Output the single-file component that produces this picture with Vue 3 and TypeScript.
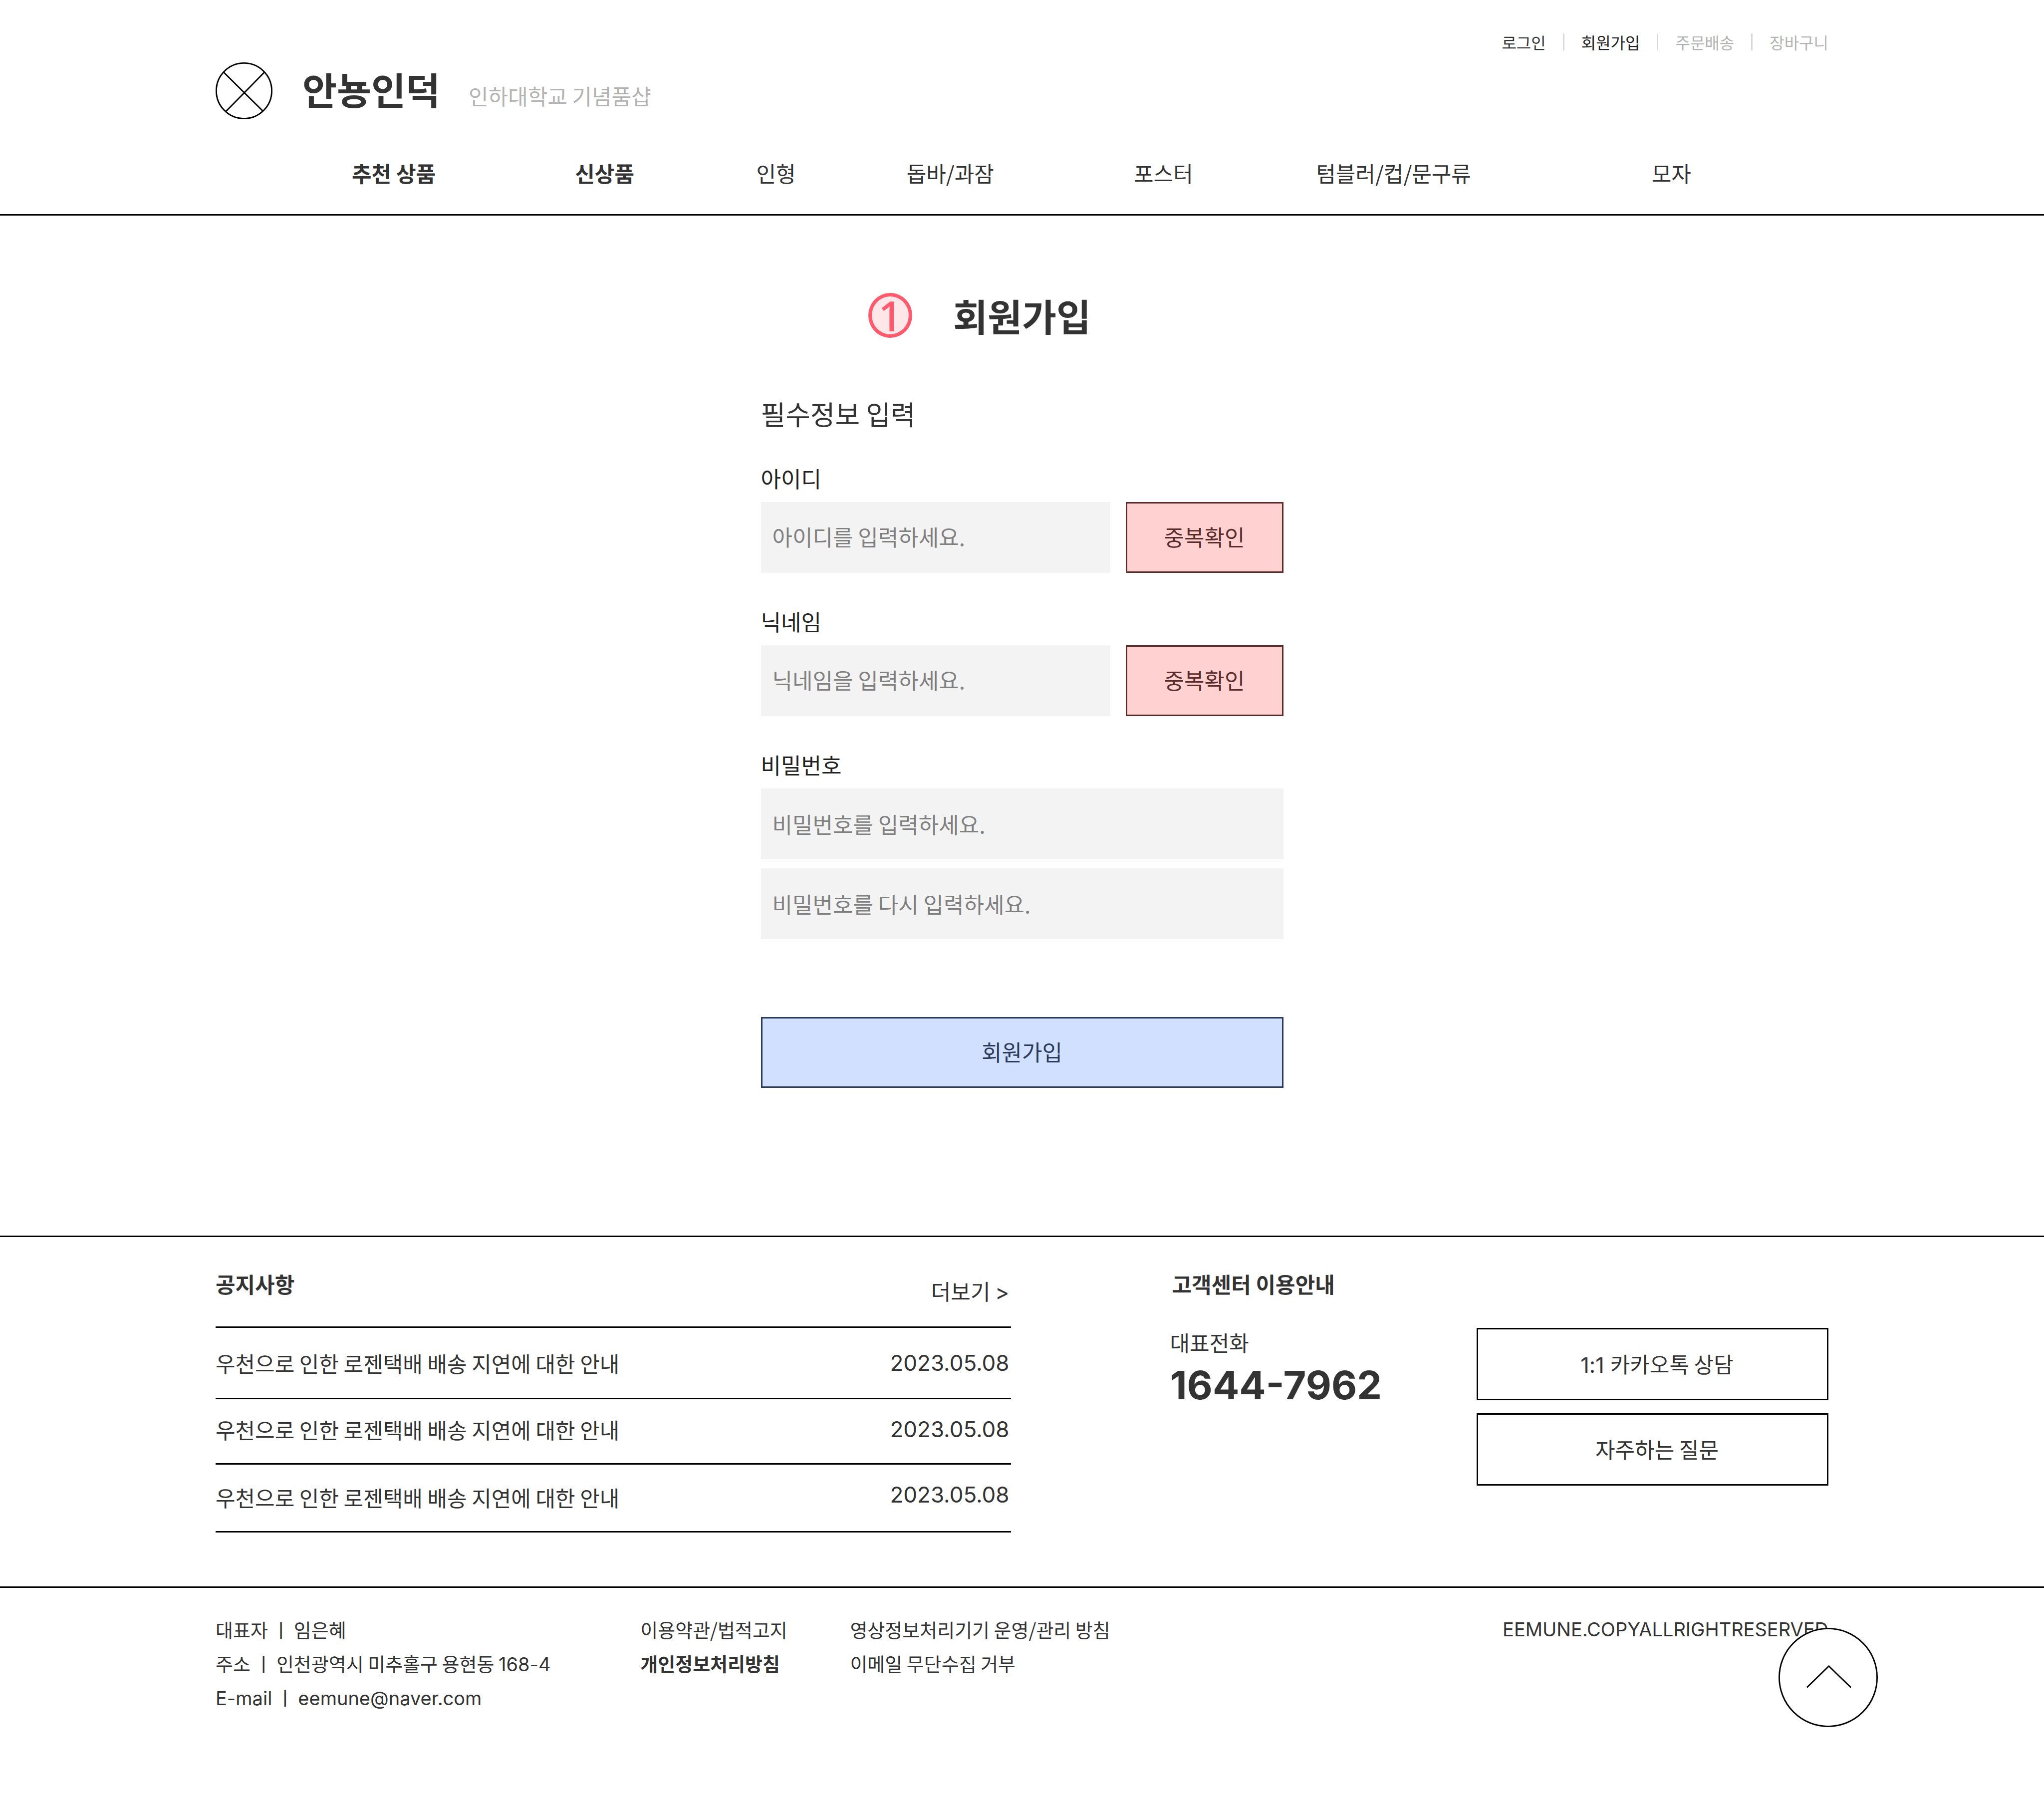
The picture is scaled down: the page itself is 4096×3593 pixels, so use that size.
<script setup lang="ts">
import { ref } from 'vue'

interface LinkItem {
  label: string
  strong?: boolean
  muted?: boolean
}

interface Notice {
  title: string
  date: string
}

const utilityLinks: LinkItem[] = [
  { label: '로그인' },
  { label: '회원가입', strong: true },
  { label: '주문배송', muted: true },
  { label: '장바구니', muted: true },
]

const categories: LinkItem[] = [
  { label: '추천 상품', strong: true },
  { label: '신상품', strong: true },
  { label: '인형' },
  { label: '돕바/과잠' },
  { label: '포스터' },
  { label: '텀블러/컵/문구류' },
  { label: '모자' },
]

const notices: Notice[] = [
  { title: '우천으로 인한 로젠택배 배송 지연에 대한 안내', date: '2023.05.08' },
  { title: '우천으로 인한 로젠택배 배송 지연에 대한 안내', date: '2023.05.08' },
  { title: '우천으로 인한 로젠택배 배송 지연에 대한 안내', date: '2023.05.08' },
]

const userId = ref('')
const nickname = ref('')
const password = ref('')
const passwordCheck = ref('')
</script>

<template>
  <div class="page">
    <header class="header">
      <nav class="utility" aria-label="회원 메뉴">
        <template v-for="(link, i) in utilityLinks" :key="link.label">
          <span v-if="i > 0" class="divider"></span>
          <a href="#" :class="{ dark: link.strong, muted: link.muted }">{{ link.label }}</a>
        </template>
      </nav>

      <div class="brand">
        <svg class="logo" viewBox="0 0 160 160" aria-hidden="true">
          <g fill="none" stroke="#000" stroke-width="4">
            <circle cx="80" cy="80" r="78" />
            <path d="M22 27 134 138M138 27 29 138" />
          </g>
        </svg>
        <div class="brand-text">
          <a href="#" class="brand-name">안뇽인덕</a>
          <span class="brand-sub">인하대학교 기념품샵</span>
        </div>
      </div>

      <nav class="categories" aria-label="상품 분류">
        <a v-for="c in categories" :key="c.label" href="#" :class="{ bold: c.strong }">{{ c.label }}</a>
      </nav>
    </header>

    <main class="main">
      <div class="heading">
        <span class="step">1</span>
        <h1>회원가입</h1>
      </div>

      <form class="form" @submit.prevent>
        <h2>필수정보 입력</h2>

        <div class="field">
          <label for="user-id">아이디</label>
          <div class="row">
            <input id="user-id" v-model="userId" type="text" placeholder="아이디를 입력하세요." />
            <button type="button" class="check">중복확인</button>
          </div>
        </div>

        <div class="field">
          <label for="nickname">닉네임</label>
          <div class="row">
            <input id="nickname" v-model="nickname" type="text" placeholder="닉네임을 입력하세요." />
            <button type="button" class="check">중복확인</button>
          </div>
        </div>

        <div class="field">
          <label for="password">비밀번호</label>
          <div class="stack">
            <input id="password" v-model="password" type="password" placeholder="비밀번호를 입력하세요." />
            <input
              v-model="passwordCheck"
              type="password"
              aria-label="비밀번호 확인"
              placeholder="비밀번호를 다시 입력하세요."
            />
          </div>
        </div>

        <button type="submit" class="submit">회원가입</button>
      </form>
    </main>

    <section class="support">
      <div class="notice">
        <div class="notice-head">
          <h3>공지사항</h3>
          <a href="#" class="more">더보기 <span class="latin">&gt;</span></a>
        </div>
        <table>
          <tbody>
            <tr v-for="(n, i) in notices" :key="i">
              <td>{{ n.title }}</td>
              <td class="date">{{ n.date }}</td>
            </tr>
          </tbody>
        </table>
      </div>

      <div class="center">
        <h3>고객센터 이용안내</h3>
        <div class="contact">
          <div>
            <p class="tel-label">대표전화</p>
            <p class="tel">1644-7962</p>
          </div>
          <div class="contact-buttons">
            <button type="button"><span class="latin">1:1&nbsp;</span>카카오톡 상담</button>
            <button type="button">자주하는 질문</button>
          </div>
        </div>
      </div>
    </section>

    <footer class="footer">
      <div>
        <p>대표자 ㅣ 임은혜</p>
        <p>주소 ㅣ 인천광역시 미추홀구 용현동 <span class="latin">168-4</span></p>
        <p><span class="latin">E-mail</span> ㅣ <span class="latin">eemune@naver.com</span></p>
      </div>
      <div>
        <p><a href="#">이용약관/법적고지</a></p>
        <p><a href="#" class="bold">개인정보처리방침</a></p>
      </div>
      <div>
        <p><a href="#">영상정보처리기기 운영/관리 방침</a></p>
        <p><a href="#">이메일 무단수집 거부</a></p>
      </div>
      <p class="copyright">EEMUNE.COPYALLRIGHTRESERVED</p>
      <button type="button" class="to-top" aria-label="맨 위로">
        <svg viewBox="0 0 280 280" aria-hidden="true">
          <g fill="none" stroke="#000" stroke-width="4">
            <circle cx="140" cy="140" r="138" />
            <path d="M80 168 142 108 204 168" />
          </g>
        </svg>
      </button>
    </footer>
  </div>
</template>

<style>
body {
  margin: 0;
  background: #fff;
}
</style>

<style scoped>
.page {
  color: #333;
  font-family: "Noto Sans CJK KR", sans-serif;
  font-size: 43px;
  line-height: 60px;
}

.page * {
  box-sizing: border-box;
}

a {
  color: inherit;
  text-decoration: none;
}

h1,
h2,
h3,
p {
  margin: 0;
}

button,
input {
  margin: 0;
  color: inherit;
  font: inherit;
}

button {
  cursor: pointer;
}

/* zero line height keeps mixed-script lines at their set height */
.latin {
  font-family: Inter, sans-serif;
  line-height: 0;
}

.bold {
  font-weight: 700;
}

.dark {
  color: #222;
}

.muted {
  color: #b3b3b3;
}

/* header */
.header {
  padding: 60px 432px 53px;
  border-bottom: 3px solid #000;
}

.utility {
  display: flex;
  justify-content: flex-end;
  align-items: center;
  gap: 34px;
  font-size: 32px;
  line-height: 48px;
}

.divider {
  width: 3px;
  height: 34px;
  background: #d9d9d9;
}

.brand {
  display: flex;
  gap: 60px;
  margin-top: 17px;
}

.logo {
  width: 114px;
  height: 114px;
}

.brand-text {
  display: flex;
  align-items: baseline;
  gap: 57px;
}

.brand-name {
  font-size: 75px;
  font-weight: 700;
  line-height: 106px;
}

.brand-sub {
  color: #b3b3b3;
}

.categories {
  display: grid;
  grid-template-columns: 447fr 363fr 301fr 455fr 365fr 672fr 354fr;
  margin-top: 77px;
  padding-left: 273px;
}

.categories a {
  justify-self: start;
  white-space: nowrap;
}

/* sign-up form */
.main {
  padding: 145px 432px 296px;
}

.heading {
  display: grid;
  grid-template-columns: 1fr auto 1fr;
  align-items: center;
  column-gap: 82px;
}

.step {
  display: flex;
  justify-content: center;
  align-items: center;
  justify-self: end;
  width: 88px;
  height: 90px;
  border: 7px solid #ff5a6e;
  border-radius: 50%;
  background: #ffe6e9;
  color: #ff5a6e;
  font-family: "Noto Sans", sans-serif;
  font-size: 84px;
  font-weight: 500;
}

h1 {
  font-size: 75px;
  font-weight: 700;
  line-height: 110px;
}

.form {
  max-width: 1047px;
  margin: 104px auto 0;
  font-size: 44px;
}

h2 {
  font-size: 54px;
  font-weight: 400;
  line-height: 76px;
}

.field {
  margin-top: 67px;
}

h2 + .field {
  margin-top: 61px;
}

.field label {
  display: block;
  margin-bottom: 18px;
  color: #222;
}

.row {
  display: flex;
  gap: 31px;
}

.stack {
  display: flex;
  flex-direction: column;
  gap: 18px;
}

.field input {
  flex: 1;
  min-width: 0;
  height: 142px;
  padding: 0 23px 4px;
  border: 0;
  border-radius: 0;
  background: #f3f3f3;
}

.stack input {
  flex: none;
  padding-bottom: 0;
}

.field input::placeholder {
  color: #808080;
  opacity: 1;
}

.check {
  width: 316px;
  height: 142px;
  padding: 0 0 4px;
  border: 3px solid #592b2b;
  background: #ffd1d1;
  color: #592b2b;
}

.submit {
  width: 100%;
  height: 142px;
  margin-top: 156px;
  padding: 0 0 4px;
  border: 3px solid #2b3a59;
  background: #d1e0ff;
  color: #2b3a59;
}

/* notices and customer center */
.support {
  display: grid;
  grid-template-columns: 1593fr 1319fr;
  column-gap: 319px;
  padding: 63px 432px 108px;
  border-top: 3px solid #000;
  border-bottom: 3px solid #000;
}

h3 {
  font-size: 43px;
  font-weight: 700;
}

.center h3 {
  padding-left: 4px;
}

.notice-head {
  display: flex;
  justify-content: space-between;
  margin-bottom: 42px;
}

.more {
  padding: 14px 3px 0 0;
}

table {
  width: 100%;
  border-top: 3px solid #000;
  border-spacing: 0;
}

td {
  height: 143px;
  padding: 0;
  border-bottom: 3px solid #000;
}

tr:nth-child(2) td {
  height: 131px;
  padding-bottom: 8px;
}

tr:nth-child(3) td {
  height: 136px;
  padding-bottom: 4px;
}

.date {
  padding-right: 3px;
  font-family: Inter, sans-serif;
  font-size: 44px;
  text-align: right;
}

tr:nth-child(3) .date {
  padding-bottom: 14px;
}

.contact {
  display: flex;
  justify-content: space-between;
  margin-top: 59px;
}

.tel-label {
  line-height: 56px;
}

.tel {
  margin-top: 10px;
  font-family: Inter, sans-serif;
  font-size: 79px;
  font-weight: 700;
  line-height: 96px;
}

.contact-buttons {
  display: flex;
  flex-direction: column;
  gap: 26px;
  width: 705px;
}

.contact-buttons button {
  height: 145px;
  padding: 0 0 4px 18px;
  border: 3px solid #000;
  background: #fff;
}

/* footer */
.footer {
  position: relative;
  display: grid;
  grid-template-columns: 851fr 420fr 980fr 980fr;
  padding: 49px 432px 157px;
  font-size: 38px;
  line-height: 68px;
}

.footer p {
  white-space: nowrap;
}

.copyright {
  justify-self: end;
  font-family: Inter, sans-serif;
}

.to-top {
  position: absolute;
  top: 80px;
  right: 333px;
  width: 199px;
  height: 199px;
  padding: 0;
  border: 0;
  border-radius: 50%;
  background: #fff;
}

.to-top svg {
  display: block;
  width: 100%;
  height: 100%;
}
</style>
